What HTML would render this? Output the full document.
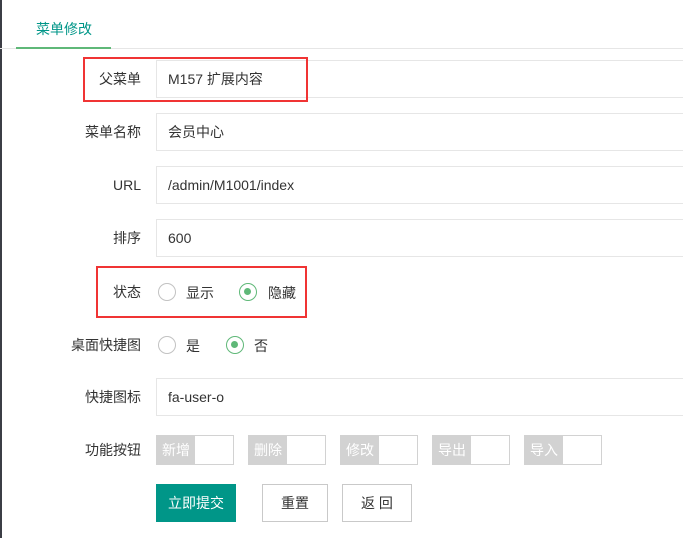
<!DOCTYPE html>
<html><head><meta charset="utf-8"><style>
*{margin:0;padding:0;box-sizing:border-box}
body{width:683px;height:538px;background:#fff;font-family:"Liberation Sans","Noto Sans CJK SC",sans-serif;font-size:14px;color:#333;position:relative;overflow:hidden}
.a{position:absolute}
.tabline{left:0;top:48px;width:683px;height:1px;background:#e6e6e6}
.tab{left:16px;top:47px;width:95px;height:2px;background:#5fb878}
.tabt{left:36px;top:19px;color:#009688;font-size:14px}
.lbl{width:141px;text-align:right;left:0;line-height:20px}
.inp{left:156px;width:540px;height:38px;border:1px solid #e6e6e6;padding-left:11px;line-height:36px;color:#333}
.red{border:2px solid #f03434}
.rad{width:18px;height:18px;border:1.5px solid #c2c2c2;border-radius:50%}
.rad.on{border-color:#5fb878}
.rad.on::after{content:"";position:absolute;left:4px;top:4px;width:7px;height:7px;border-radius:50%;background:#5fb878}
.sw{width:78px;height:30px;border:1px solid #d2d2d2;background:#fff}
.sw span{position:absolute;left:0;top:0;width:38px;height:28px;background:#d2d2d2;color:#fff;line-height:28px;text-align:center;font-size:14px}
.btn{height:38px;border:1px solid #c9c9c9;text-align:center;line-height:36px;background:#fff;color:#333}
</style></head><body>
<div class="a" style="left:0;top:0;width:2px;height:538px;background:#3b3d45"></div>
<div class="a tabline"></div><div class="a tab"></div><div class="a tabt">菜单修改</div>

<div class="a lbl" style="top:69px">父菜单</div>
<div class="a inp" style="top:60px">M157 扩展内容</div>
<div class="a red" style="left:83px;top:57px;width:225px;height:45px"></div>

<div class="a lbl" style="top:122px">菜单名称</div>
<div class="a inp" style="top:113px">会员中心</div>
<div class="a lbl" style="top:175px">URL</div>
<div class="a inp" style="top:166px">/admin/M1001/index</div>
<div class="a lbl" style="top:228px">排序</div>
<div class="a inp" style="top:219px">600</div>

<div class="a lbl" style="top:282px">状态</div>
<div class="a rad" style="left:158px;top:283px"></div><div class="a" style="left:186px;top:283px">显示</div>
<div class="a rad on" style="left:239px;top:283px"></div><div class="a" style="left:268px;top:283px">隐藏</div>
<div class="a red" style="left:96px;top:266px;width:211px;height:52px"></div>

<div class="a lbl" style="top:335px">桌面快捷图</div>
<div class="a rad" style="left:158px;top:336px"></div><div class="a" style="left:186px;top:336px">是</div>
<div class="a rad on" style="left:226px;top:336px"></div><div class="a" style="left:254px;top:336px">否</div>

<div class="a lbl" style="top:387px">快捷图标</div>
<div class="a inp" style="top:378px">fa-user-o</div>

<div class="a lbl" style="top:440px">功能按钮</div>
<div class="a sw" style="left:156px;top:435px"><span>新增</span></div>
<div class="a sw" style="left:248px;top:435px"><span>删除</span></div>
<div class="a sw" style="left:340px;top:435px"><span>修改</span></div>
<div class="a sw" style="left:432px;top:435px"><span>导出</span></div>
<div class="a sw" style="left:524px;top:435px"><span>导入</span></div>

<div class="a btn" style="left:156px;top:484px;width:80px;background:#009688;border-color:#009688;color:#fff">立即提交</div>
<div class="a btn" style="left:262px;top:484px;width:66px">重置</div>
<div class="a btn" style="left:342px;top:484px;width:70px">返 回</div>
</body></html>
